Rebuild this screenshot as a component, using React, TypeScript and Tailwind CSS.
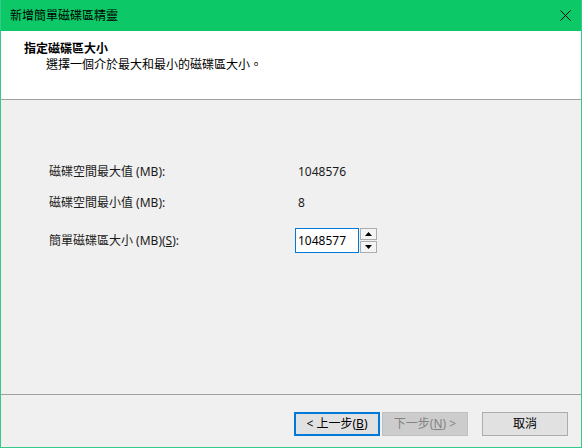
const FONT = {
  fontFamily: '"Segoe UI", "Noto Sans", "Noto Sans CJK TC", sans-serif',
};

function SpinArrow({ up }: { up?: boolean }) {
  return (
    <svg width="7" height="4" viewBox="0 0 7 4" aria-hidden="true">
      {up ? <path d="M0 4 L3.5 0 L7 4 Z" fill="#000" /> : <path d="M0 0 L3.5 4 L7 0 Z" fill="#000" />}
    </svg>
  );
}

export default function App() {
  return (
    <div
      className="w-[582px] h-[448px] flex flex-col bg-[#f0f0f0] border-x border-b border-[#35c98a] text-[12px] text-black overflow-hidden"
      style={FONT}
    >
      {/* Title bar */}
      <div className="h-[31px] shrink-0 bg-[#0cc866] flex items-center justify-between pl-[9px] pr-[9px]">
        <span className="leading-[16px]">新增簡單磁碟區精靈</span>
        <svg width="11" height="11" viewBox="0 0 11 11" aria-hidden="true" className="mr-[1px]">
          <path d="M0.5 0.5 L10.5 10.5 M10.5 0.5 L0.5 10.5" stroke="#000" strokeWidth="1" />
        </svg>
      </div>

      {/* Header */}
      <div className="h-[69px] shrink-0 bg-white border-b border-[#a0a0a0] pt-[10px]">
        <div className="pl-[23px] leading-[16px] font-semibold">指定磁碟區大小</div>
        <div className="pl-[45px] leading-[16px]">選擇一個介於最大和最小的磁碟區大小。</div>
      </div>

      {/* Body */}
      <div className="flex-1 border-b border-[#a0a0a0] pl-[48px] pt-[64px] flex flex-col">
        <div className="flex h-[16px] leading-[16px] text-[#1a1a1a]">
          <span className="w-[249px]">磁碟空間最大值 (MB):</span>
          <span>1048576</span>
        </div>
        <div className="flex h-[16px] leading-[16px] mt-[15px] text-[#1a1a1a]">
          <span className="w-[249px]">磁碟空間最小值 (MB):</span>
          <span>8</span>
        </div>
        <div className="flex h-[25px] items-center mt-[17px]">
          <span className="w-[246px] text-[#1a1a1a]">
            簡單磁碟區大小 (MB)(<span className="underline">S</span>):
          </span>
          <div className="w-[64px] h-[25px] bg-white border border-[#0078d7] flex items-center pl-[2px] leading-[16px]">
            1048577
          </div>
          <div className="ml-[1px] w-[17px] h-[25px] flex flex-col">
            <div className="h-[12px] border border-[#adadad] bg-[#f4f4f4] flex items-center justify-center">
              <SpinArrow up />
            </div>
            <div className="mt-[1px] h-[12px] border border-[#adadad] bg-[#f4f4f4] flex items-center justify-center">
              <SpinArrow />
            </div>
          </div>
        </div>
      </div>

      {/* Footer buttons */}
      <div className="h-[52px] shrink-0 pt-[17px] pl-[293px] flex items-start">
        <button className="w-[86px] h-[24px] border-2 border-[#0078d7] bg-[#e1e1e1] flex items-center justify-center leading-[16px]">
          &lt; 上一步(<span className="underline">B</span>)
        </button>
        <button className="ml-[2px] w-[86px] h-[24px] border border-[#bfbfbf] bg-[#cccccc] text-[#838383] flex items-center justify-center leading-[16px]">
          下一步(<span className="underline">N</span>) &gt;
        </button>
        <button className="ml-[14px] w-[86px] h-[24px] border border-[#adadad] bg-[#e1e1e1] flex items-center justify-center leading-[16px]">
          取消
        </button>
      </div>
    </div>
  );
}
